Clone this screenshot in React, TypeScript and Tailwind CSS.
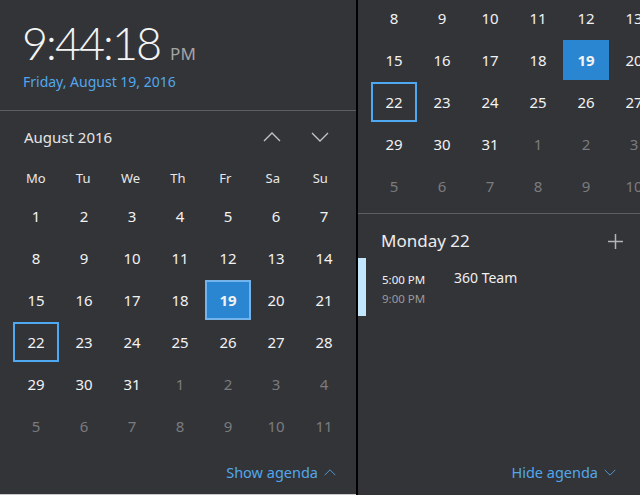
import React from "react";

type Day = { n: number; muted?: boolean };

const weeks: Day[][] = [
  [1, 2, 3, 4, 5, 6, 7].map((n) => ({ n })),
  [8, 9, 10, 11, 12, 13, 14].map((n) => ({ n })),
  [15, 16, 17, 18, 19, 20, 21].map((n) => ({ n })),
  [22, 23, 24, 25, 26, 27, 28].map((n) => ({ n })),
  [
    { n: 29 },
    { n: 30 },
    { n: 31 },
    { n: 1, muted: true },
    { n: 2, muted: true },
    { n: 3, muted: true },
    { n: 4, muted: true },
  ],
  [5, 6, 7, 8, 9, 10, 11].map((n) => ({ n, muted: true })),
];

const weekdays = ["Mo", "Tu", "We", "Th", "Fr", "Sa", "Su"];

function Chevron({ up, className }: { up?: boolean; className?: string }) {
  return (
    <svg viewBox="0 0 18 10" className={className} fill="none">
      <polyline
        points={up ? "1,9 9,1 17,9" : "1,1 9,9 17,1"}
        stroke="currentColor"
        strokeWidth="1.3"
      />
    </svg>
  );
}

function DayCell({ day, hovered }: { day: Day; hovered?: boolean }) {
  const selected = !day.muted && day.n === 19;
  const today = !day.muted && day.n === 22;
  let box = "border-2 border-transparent";
  if (selected)
    box = hovered
      ? "bg-[#2a86d0] border-2 border-[#74b4ea] font-bold"
      : "bg-[#2a86d0] border-2 border-[#2a86d0] font-bold";
  if (today) box = "border-2 border-[#4ea8f2]";
  return (
    <div className="w-[48px] h-[42px] flex items-center justify-center shrink-0">
      <div
        className={`w-[46px] h-[40px] flex items-center justify-center text-[15px] ${box} ${
          day.muted ? "text-[#7b7b7d]" : "text-[#f2f2f2]"
        }`}
      >
        {day.n}
      </div>
    </div>
  );
}

function Weeks({ rows, hovered }: { rows: Day[][]; hovered?: boolean }) {
  return (
    <div className="flex flex-col">
      {rows.map((w, i) => (
        <div key={i} className="flex">
          {w.map((d, j) => (
            <DayCell key={j} day={d} hovered={hovered} />
          ))}
        </div>
      ))}
    </div>
  );
}

export default function App() {
  return (
    <div
      className="w-[640px] h-[495px] flex bg-[#333438] overflow-hidden select-none"
      style={{ fontFamily: '"Noto Sans", "Open Sans", sans-serif' }}
    >
      {/* left flyout */}
      <div className="w-[356px] h-[495px] flex flex-col shrink-0 border-b border-[#c9c9c9]">
        <div className="h-[111px] pl-[22px] pt-[16px] border-b border-[#5e5e60] shrink-0">
          <div className="flex items-baseline">
            <span
              className="text-[45px] leading-[54px] font-light text-[#f4f4f4] tracking-[-2px]"
              style={{ fontFamily: 'Lato, "Open Sans", sans-serif' }}
            >
              9:44:18
            </span>
            <span className="ml-[10px] text-[17px] text-[#a4a4a6]">PM</span>
          </div>
          <div className="mt-[1px] pl-[1px] text-[14px] text-[#52a7ec]">
            Friday, August 19, 2016
          </div>
        </div>

        <div className="px-[12px] flex flex-col flex-1">
          <div className="h-[44px] mt-[4px] flex items-center">
            <span className="pl-[12px] text-[15px] text-[#e4e4e4] flex-1">
              August 2016
            </span>
            <div className="w-[48px] flex justify-center text-[#c4c4c6]">
              <Chevron up className="w-[18px] h-[10px]" />
            </div>
            <div className="w-[48px] flex justify-center text-[#c4c4c6]">
              <Chevron className="w-[18px] h-[10px]" />
            </div>
          </div>
          <div className="flex h-[32px] mt-[4px] items-center">
            {weekdays.map((w) => (
              <div
                key={w}
                className="w-[48px] text-center text-[13px] text-[#e8e8e8]"
              >
                {w}
              </div>
            ))}
          </div>
          <Weeks rows={weeks} hovered />
          <div className="flex-1 flex items-center justify-end pt-[4px] pr-[8px] text-[#52a7ec] text-[14.5px] gap-[6px]">
            <span>Show agenda</span>
            <Chevron up className="w-[12px] h-[7px]" />
          </div>
        </div>
      </div>

      <div className="w-[2px] bg-black shrink-0" />

      {/* right flyout */}
      <div className="flex-1 h-[495px] flex flex-col overflow-hidden">
        <div className="h-[214px] shrink-0 border-b border-[#5e5e60] overflow-hidden pl-[12px]">
          <div className="mt-[-3px]">
            <Weeks rows={weeks.slice(1)} />
          </div>
        </div>
        <div className="flex items-center h-[44px] mt-[5px] pl-[23px] pr-[17px]">
          <span className="flex-1 text-[17px] text-[#ececec]">Monday 22</span>
          <svg viewBox="0 0 14 14" className="w-[15px] h-[15px] text-[#b4b4b6]">
            <path d="M7 0v14M0 7h14" stroke="currentColor" strokeWidth="1.4" />
          </svg>
        </div>
        <div className="flex h-[58px] mt-[-5px]">
          <div className="w-[8px] bg-[#c2e6fb]" />
          <div className="pl-[16px] pt-[13px] w-[88px] flex flex-col">
            <span className="text-[11.5px] leading-[17px] text-[#f0f0f0]">5:00 PM</span>
            <span className="text-[11.5px] leading-[17px] mt-[2px] text-[#9a9a9c]">9:00 PM</span>
          </div>
          <div className="pt-[9px] text-[14px] text-[#f0f0f0]">360 Team</div>
        </div>
        <div className="flex-1 flex items-end justify-end pb-[13px] pr-[24px] text-[#52a7ec] text-[14.5px] gap-[6px]">
          <span className="leading-[20px]">Hide agenda</span>
          <Chevron className="w-[12px] h-[7px] mb-[6px]" />
        </div>
      </div>
    </div>
  );
}
